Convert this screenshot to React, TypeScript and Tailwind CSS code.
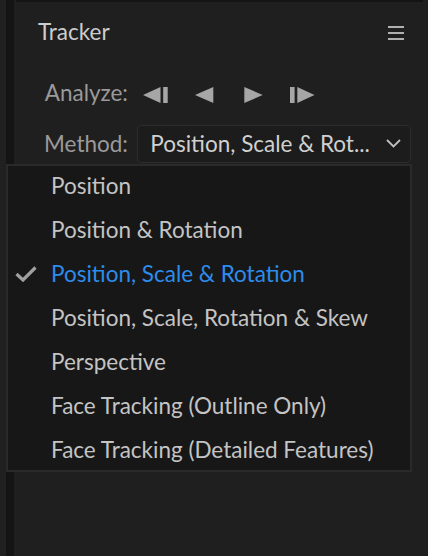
import React from "react";

const items = [
  "Position",
  "Position & Rotation",
  "Position, Scale & Rotation",
  "Position, Scale, Rotation & Skew",
  "Perspective",
  "Face Tracking (Outline Only)",
  "Face Tracking (Detailed Features)",
];
const selected = 2;

function StepBack() {
  return (
    <svg width="25" height="16" viewBox="0 0 25 16">
      <polygon points="0,8 17.5,0 17.5,16" fill="#a6a6a6" />
      <rect x="20.2" y="0" width="4.5" height="16" fill="#a6a6a6" />
    </svg>
  );
}
function Back() {
  return (
    <svg width="19" height="16" viewBox="0 0 19 16">
      <polygon points="0,8 18.3,0 18.3,16" fill="#a6a6a6" />
    </svg>
  );
}
function Fwd() {
  return (
    <svg width="19" height="16" viewBox="0 0 19 16">
      <polygon points="0.3,0 18.7,8 0.3,16" fill="#a6a6a6" />
    </svg>
  );
}
function StepFwd() {
  return (
    <svg width="25" height="16" viewBox="0 0 25 16">
      <rect x="0" y="0" width="4.6" height="16" fill="#a6a6a6" />
      <polygon points="7.3,0 24.5,8 7.3,16" fill="#a6a6a6" />
    </svg>
  );
}

export default function App() {
  return (
    <div
      className="relative w-[428px] h-[556px] flex bg-[#1f1f1f] overflow-hidden"
      style={{ fontFamily: "Lato, 'Noto Sans', sans-serif" }}
    >
      <div className="w-[6px] h-full bg-[#202020]" />
      <div className="w-[8px] h-full bg-[#141414]" />
      <div className="flex-1 flex flex-col">
        <div className="h-[2px] ml-[2px] mr-[5px] bg-[#141414]" />
        <div className="mt-[15.5px] h-[28px] flex items-center justify-between pl-[24px] pr-[24px]">
          <span className="text-[22.5px] leading-[28px] text-[#cdcdcd]">Tracker</span>
          <svg width="16" height="14" viewBox="0 0 16 14" className="mt-[3px]">
            <rect x="0" y="0" width="16" height="2" fill="#b0b0b0" />
            <rect x="0" y="6" width="16" height="2" fill="#b0b0b0" />
            <rect x="0" y="12" width="16" height="2" fill="#b0b0b0" />
          </svg>
        </div>
        <div className="mt-[33.5px] h-[28px] flex items-center">
          <span className="w-[114px] text-right text-[22.5px] leading-[28px] text-[#9a9a9a]">
            Analyze:
          </span>
          <div className="ml-[3px] flex items-center mt-[4px]">
            <div className="w-[49px] flex justify-center"><StepBack /></div>
            <div className="w-[49px] flex justify-center"><Back /></div>
            <div className="w-[49px] flex justify-center"><Fwd /></div>
            <div className="w-[49px] flex justify-center"><StepFwd /></div>
          </div>
        </div>
        <div className="mt-[17.5px] h-[38px] flex items-center">
          <span className="w-[114px] text-right text-[22.5px] leading-[28px] text-[#9a9a9a]">
            Method:
          </span>
          <div className="ml-[9.3px] w-[273.4px] h-[38px] rounded-[4px] border border-[#2c2c2c] bg-[#1c1c1c] flex items-center justify-between pl-[12px] pr-[9px]">
            <span className="text-[22.5px] leading-[28px] text-[#d0d0d0] whitespace-nowrap">
              Position, Scale &amp; Rot...
            </span>
            <svg width="15" height="9" viewBox="0 0 15 9">
              <polyline points="1,1 7.5,7.5 14,1" fill="none" stroke="#c0c0c0" strokeWidth="1.8" />
            </svg>
          </div>
        </div>
      </div>

      <div className="absolute left-[6px] top-[164px] w-[406px] h-[308px] border-2 border-[#2a2a2a] bg-[#171717]">
        <div className="-mt-[2px] flex flex-col">
          {items.map((t, i) => (
            <div key={t} className="h-[44px] flex items-center">
              <div className="w-[43px] h-full flex items-center pl-[7px]">
                {i === selected && (
                  <svg width="22" height="16" viewBox="0 0 22 16">
                    <polyline points="1.5,8 8,14 20.5,1.5" fill="none" stroke="#a0a0a0" strokeWidth="3.2" />
                  </svg>
                )}
              </div>
              <span
                className={
                  "text-[22.5px] leading-[28px] whitespace-nowrap " +
                  (i === selected ? "text-[#2d8ceb]" : "text-[#c4c4c4]")
                }
              >
                {t}
              </span>
            </div>
          ))}
        </div>
      </div>
    </div>
  );
}
